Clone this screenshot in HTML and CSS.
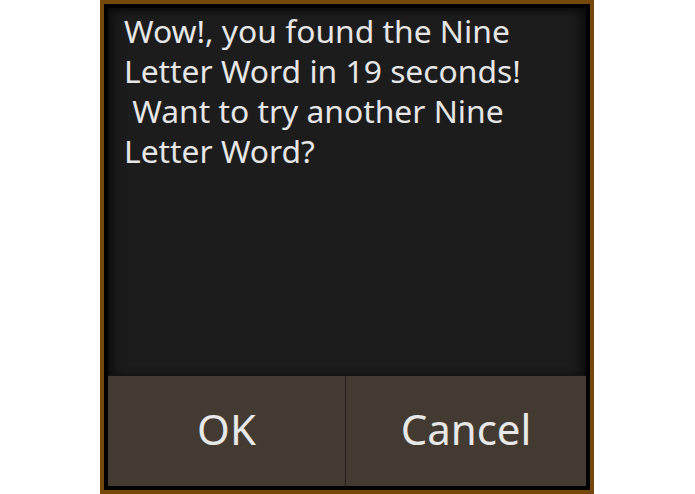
FILE: index.html
```html
<!DOCTYPE html>
<html lang="en">
<head>
<meta charset="utf-8">
<title>Nine Letter Word</title>
<link rel="stylesheet" href="styles.css">
</head>
<body>
<div class="stage">
  <div class="dialog">
    <div class="inner">
      <div class="message">
        <p class="text">Wow!, you found the Nine<br>Letter Word in 19 seconds!<br>&nbsp;Want to try another Nine<br>Letter Word?</p>
      </div>
      <div class="buttons">
        <button class="btn btn-ok">OK</button>
        <button class="btn btn-cancel">Cancel</button>
      </div>
    </div>
  </div>
</div>
</body>
</html>
```

FILE: styles.css
```css
html, body {
  margin: 0;
  padding: 0;
  background: #ffffff;
}

.stage {
  width: 695px;
  height: 494px;
  display: flex;
  justify-content: flex-start;
  align-items: flex-start;
  padding-left: 100px;
  box-sizing: border-box;
}

.dialog {
  box-sizing: border-box;
  width: 494px;
  height: 494px;
  border: 4px solid #74480a;
  background: #000000;
  padding: 4px;
}

.inner {
  width: 100%;
  height: 100%;
  display: flex;
  flex-direction: column;
}

.message {
  flex: 1;
  background: #1c1c1c;
  box-shadow: inset 10px 0 12px -6px #0a0a0a, inset -10px 0 12px -6px #0a0a0a, inset 0 6px 8px -4px #0d0d0d;
  padding: 3px 16px 0 16px;
  border-bottom: 1px solid #141414;
}

.text {
  margin: 0;
  font-family: "Noto Sans", "Open Sans", sans-serif;
  font-size: 31.8px;
  line-height: 40px;
  color: #e6e6e6;
}

.buttons {
  height: 110px;
  display: flex;
  background: #433a31;
}

.btn {
  border: 0;
  margin: 0;
  background: #433a31;
  color: #e8e8e8;
  font-family: "Noto Sans", "Open Sans", sans-serif;
  font-size: 42px;
  padding: 0 0 5px 0;
  display: flex;
  align-items: center;
  justify-content: center;
}

.btn-ok {
  width: 237px;
  flex: none;
}

.btn-cancel {
  flex: 1;
  border-left: 1px solid #25201b;
}
```
